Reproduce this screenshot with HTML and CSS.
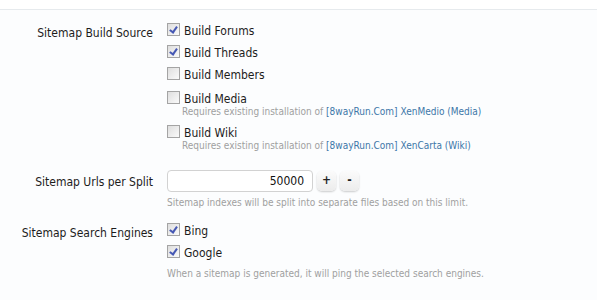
FILE: index.html
```html
<!DOCTYPE html>
<html>
<head>
<meta charset="utf-8">
<link rel="stylesheet" href="styles.css">
</head>
<body>
<div class="top"></div>
<div class="form">
  <div class="row">
    <div class="label">Sitemap Build Source</div>
    <div class="ctrls">
      <label class="cb"><span class="box on"></span>Build Forums</label>
      <label class="cb"><span class="box on"></span>Build Threads</label>
      <label class="cb"><span class="box"></span>Build Members</label>
      <div class="cbg">
        <label class="cb"><span class="box"></span>Build Media</label>
        <p class="hint">Requires existing installation of <a>[8wayRun.Com] XenMedio (Media)</a></p>
      </div>
      <div class="cbg">
        <label class="cb"><span class="box"></span>Build Wiki</label>
        <p class="hint">Requires existing installation of <a>[8wayRun.Com] XenCarta (Wiki)</a></p>
      </div>
    </div>
  </div>
  <div class="row r2">
    <div class="label lbl-input">Sitemap Urls per Split</div>
    <div class="ctrls">
      <div class="spin">
        <div class="input">50000</div>
        <span class="btn">+</span>
        <span class="btn">-</span>
      </div>
      <p class="hint">Sitemap indexes will be split into separate files based on this limit.</p>
    </div>
  </div>
  <div class="row r3">
    <div class="label">Sitemap Search Engines</div>
    <div class="ctrls">
      <label class="cb"><span class="box on"></span>Bing</label>
      <label class="cb"><span class="box on"></span>Google</label>
      <p class="hint">When a sitemap is generated, it will ping the selected search engines.</p>
    </div>
  </div>
</div>
</body>
</html>
```
FILE: styles.css
```css
html, body { margin: 0; padding: 0; }
body {
  background: #fcfdfe;
  font-family: "DejaVu Sans Condensed", "DejaVu Sans", sans-serif;
  font-size: 12px;
  color: #1c1c1c;
  width: 597px;
  height: 300px;
  overflow: hidden;
}
.top {
  height: 9px;
  background: #ffffff;
  border-bottom: 1px solid #e6eaed;
}
.form { padding-top: 13px; }
.row { display: flex; }
.label {
  width: 153px;
  text-align: right;
  padding-top: 2px;
  line-height: 16px;
}
.ctrls {
  margin-left: 14px;
  display: flex;
  flex-direction: column;
}
.cb {
  display: flex;
  align-items: center;
  height: 16px;
  line-height: 16px;
  margin-bottom: 6px;
}
.box {
  width: 11px;
  height: 11px;
  border: 1px solid #a4a4a4;
  background: linear-gradient(135deg, #dedede, #fafafa);
  margin-right: 4px;
  margin-top: -3px;
  position: relative;
  box-sizing: content-box;
}
.box.on::after {
  content: "";
  position: absolute;
  left: 3px;
  top: 1px;
  width: 3px;
  height: 6px;
  border: solid #4658b4;
  border-width: 0 2px 2px 0;
  transform: rotate(35deg);
}
.cbg { margin-bottom: 7px; }
.cbg:first-of-type { margin-top: 2px; }
.cbg .cb { margin-bottom: 0; }
.cbg .hint { margin-top: -1px; }
.hint {
  margin: 0 0 0 15px;
  font-size: 10px;
  line-height: 12px;
  color: #a0a0a0;
}
.hint a { color: #3d77a8; }
.r2 { margin-top: 11px; }
.lbl-input { padding-top: 4px; }
.spin { display: flex; align-items: center; }
.input {
  width: 136px;
  height: 20px;
  border: 1px solid #d2d2d2;
  border-radius: 4px;
  background: #fff;
  text-align: right;
  padding-right: 8px;
  line-height: 20px;
  color: #111;
}
.btn {
  width: 19px;
  height: 20px;
  margin-left: 4px;
  border-radius: 5px;
  background: linear-gradient(#fbfbfb, #ececec);
  box-shadow: 0 1px 2px rgba(0,0,0,0.2);
  text-align: center;
  line-height: 19px;
  font-size: 12px;
  font-weight: bold;
  color: #222;
}
.r2 .hint { margin: 5px 0 0 0; }
.r3 { margin-top: 14px; }
.r3 .hint { margin: 5px 0 0 0; }
.r3 .cb:last-of-type { margin-bottom: 2px; }
```
